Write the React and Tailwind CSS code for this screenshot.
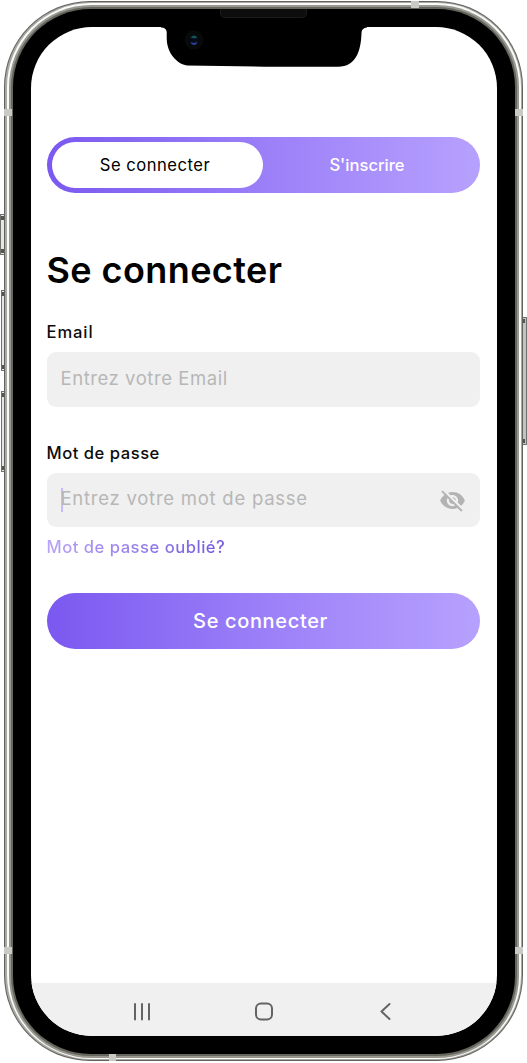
import React from "react";
import { MdVisibilityOff } from "react-icons/md";

function SideKey({ className }) {
  return (
    <div className={`flex flex-col justify-between border border-[#70706c] py-px ${className}`}>
      <span className="h-[4px] w-[3px] bg-[#555550]" />
      <span className="h-[4px] w-[3px] bg-[#555550]" />
    </div>
  );
}

function Antenna({ className }) {
  return <span className={`absolute bg-[#c9c9c6] ${className}`} />;
}

function Notch() {
  return (
    <svg
      className="absolute inset-x-0 -top-[2px] mx-auto"
      width="206"
      height="42"
      viewBox="161 25 206 42"
      aria-hidden="true"
    >
      <path
        d="M161 25H367V27.500Q361.500 28 361.500 33C361 51 356 66.700 338 66.700H264L187 65.500C177 64 166.700 53 166.700 38V32Q166.300 27.700 161 27.500Z"
        fill="#000"
      />
      <circle cx="194" cy="40" r="9.500" fill="#080a0a" />
      <circle cx="194" cy="40" r="4.500" fill="#070b18" />
      <path d="M190.500 37.500q3.500-4 7 0l-3 1Z" fill="#155456" />
      <path d="M190.500 42l3 1 4-1q-1 3-3.500 3t-3.500-3Z" fill="#2c3d9d" />
    </svg>
  );
}

function Field({ label, labelClass, placeholder, placeholderClass, active, children }) {
  return (
    <div className="flex flex-col gap-[7px]">
      <label
        className={`text-[16.6px] font-medium leading-[26px] text-[#0c0c0c] ${labelClass}`}
      >
        {label}
      </label>
      <div className="flex h-[54.5px] items-center rounded-[9px] bg-[#f0f0f0] px-[14px]">
        {active && <span className="-mr-[2px] h-6 w-[2px] bg-[#c9bbfb]" />}
        <span
          className={`flex-1 pb-[3px] text-[18.5px] leading-6 text-[#b7b7b7] ${placeholderClass}`}
        >
          {placeholder}
        </span>
        {children}
      </div>
    </div>
  );
}

function LoginForm() {
  return (
    <form className="flex flex-col pt-[23px]">
      <div className="flex flex-col gap-[33px]">
        <Field
          label="Email"
          labelClass="tracking-[0.9px]"
          placeholder="Entrez votre Email"
          placeholderClass="tracking-[0.56px]"
        />
        <Field
          label="Mot de passe"
          labelClass="tracking-[0.52px]"
          placeholder="Entrez votre mot de passe"
          placeholderClass="tracking-[0.75px]"
          active
        >
          <MdVisibilityOff className="mt-px size-[27px] text-[#b3b3b3]" />
        </Field>
      </div>
      <a className="mt-[7px] w-fit bg-linear-to-r from-[#b9a3f8] to-[#7458dc] bg-clip-text text-[16.6px] font-medium leading-[26px] tracking-[0.51px] text-transparent">
        Mot de passe oublié?
      </a>
      <button
        type="button"
        className="mt-[33px] h-[55.5px] rounded-full bg-linear-to-r from-[#7b58f0] via-[#9b7ff8] to-[#b7a1fe] pr-[5px] pt-px text-[20px] font-medium tracking-[0.65px] text-white"
      >
        Se connecter
      </button>
    </form>
  );
}

function NavBar() {
  return (
    <nav className="grid h-[53px] shrink-0 grid-cols-3 place-items-center bg-[#f0f0f0] px-[50px] pt-[4px] text-[#646464]">
      <svg width="22" height="22" viewBox="0 0 22 22" fill="none" stroke="currentColor" strokeWidth="2" strokeLinecap="round">
        <path d="M4 3V18.500M11 3V18.500M18 3V18.500" />
      </svg>
      <svg width="22" height="22" viewBox="0 0 22 22" fill="none" stroke="currentColor" strokeWidth="2">
        <rect x="3" y="2.500" width="16" height="16" rx="5" />
      </svg>
      <svg width="22" height="22" viewBox="0 0 22 22" fill="none" stroke="currentColor" strokeWidth="2" strokeLinecap="round" strokeLinejoin="round">
        <path d="M14.500 3L6.500 10.500L14.500 18" />
      </svg>
    </nav>
  );
}

export default function App() {
  return (
    <div className="flex h-[1063px] w-[527px] overflow-hidden bg-white font-['Inter',sans-serif]">
      <div className="-mr-[2px] flex w-[6px] shrink-0 flex-col items-end pt-[214px]">
        <SideKey className="h-[41px] w-[6px] bg-[#e6e6e4]" />
        <SideKey className="mt-[35px] h-[81px] w-[5px] bg-[#e6e6e4]" />
        <SideKey className="mt-5 h-[81px] w-[5px] bg-[#e6e6e4]" />
      </div>

      <div className="relative mt-px h-[1060px] w-[519px] shrink-0 rounded-[86px] bg-[#62625e] p-px">
        <div className="h-full rounded-[85px] bg-[#a8a9a3] px-[1.5px] py-px">
          <div className="h-full rounded-[84px] bg-[#fafafa] px-[2px] py-[1.5px]">
            <div className="h-full rounded-[82px] bg-[#989890] px-[2px] py-[2px]">
              <div className="h-full rounded-[80px] bg-[#66665f] px-[2px] py-[2px]">
                <div className="h-full rounded-[78px] bg-black px-[18px] pb-[17.5px] pt-[18px]">
                  <main className="relative flex h-full flex-col overflow-hidden rounded-[61px] bg-white">
                    <Notch />
                    <div className="flex flex-1 flex-col pl-4 pr-[17px] pt-[110px]">
                      <div className="flex h-[56.5px] rounded-full bg-linear-to-r from-[#7b58f0] via-[#9b7ff8] to-[#b7a1fe] p-[5.5px]">
                        <button className="w-[211px] rounded-full bg-white pr-[5px] pt-[2px] text-[16.6px] tracking-[0.5px] text-black">
                          Se connecter
                        </button>
                        <button className="flex-1 pr-[3px] pt-[2px] text-[16.6px] font-medium text-white">
                          S'inscrire
                        </button>
                      </div>
                      <h1 className="pt-[51px] text-[36px] font-semibold leading-[52px] tracking-[0.42px] text-black">
                        Se connecter
                      </h1>
                      <LoginForm />
                    </div>
                    <NavBar />
                  </main>
                </div>
              </div>
            </div>
          </div>
        </div>
        <Antenna className="left-0 top-[108px] h-[7px] w-2" />
        <Antenna className="right-0 top-[108px] h-[7px] w-2" />
        <Antenna className="left-0 top-[946px] h-[7px] w-2" />
        <Antenna className="right-0 top-[946px] h-[7px] w-2" />
        <Antenna className="left-[407px] top-0 h-[7px] w-2" />
        <Antenna className="bottom-0 left-[105px] h-[7px] w-[7px]" />
        <span className="absolute inset-x-0 top-2 mx-auto h-[9px] w-[87px] rounded-b-[5px] border border-t-0 border-[#1c1c1c] bg-[#0d0d0d]" />
      </div>

      <div className="-ml-[2px] shrink-0 pt-[317px]">
        <SideKey className="h-[128px] w-[6px] bg-[#c3c3c0]" />
      </div>
    </div>
  );
}
